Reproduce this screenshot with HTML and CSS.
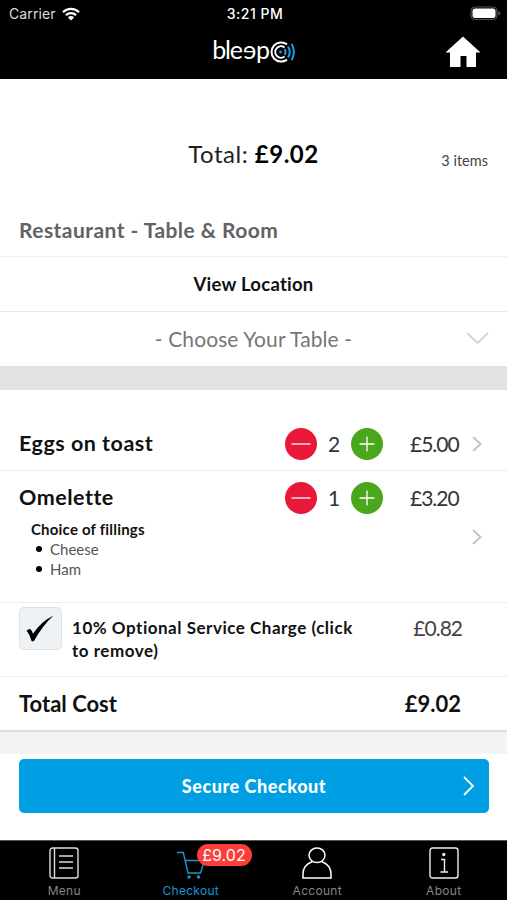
FILE: index.html
```html
<!DOCTYPE html>
<html lang="en">
<head>
  <meta charset="UTF-8" />
  <meta name="viewport" content="width=device-width, initial-scale=1.0" />
  <title>Checkout</title>
  <link rel="stylesheet" href="styles.css">
</head>
<body>
  <header class="header">
    <div class="status-bar">
      <div class="carrier">
        <span>Carrier</span>
        <svg width="18" height="14" viewBox="0 0 18 14" fill="none" stroke="#fff" stroke-width="2.3">
          <path d="M1 5.2a11.4 11.4 0 0 1 16 0M3.9 8.2a7.3 7.3 0 0 1 10.2 0" />
          <path d="M9 13.5L5.9 10.4a4.4 4.4 0 0 1 6.2 0z" fill="#fff" stroke="none" />
        </svg>
      </div>
      <span class="clock">3:21 PM</span>
      <svg class="battery" width="31" height="15" viewBox="0 0 31 15">
        <rect x="1" y="1" width="26" height="12.5" rx="4" fill="none" stroke="#555" stroke-width="1.2" />
        <rect x="2.5" y="2.5" width="23" height="9.5" rx="2.5" fill="#fff" />
        <path d="M28.5 5v4.5q1.7-.6 1.7-2.2T28.5 5z" fill="#666" />
      </svg>
    </div>
    <div class="nav-bar">
      <div class="logo">
        <span class="logo-text">ble<span class="flip">e</span>p</span>
        <svg width="27" height="24" viewBox="0 0 27 24" fill="none" stroke-width="2">
          <path d="M18 4.4A9.6 9.6 0 1 0 18 19.6M15.5 7.5A5.7 5.7 0 1 0 15.5 16.5" stroke="#fff" />
          <circle cx="11.5" cy="12" r="1.4" fill="#1c9fdc" />
          <path d="M15.5 9q2.200 3 0 6M19 6.500q3.600 5.500 0 11M22.500 3.700q4.800 8.300 0 16.600" stroke="#1c9fdc" />
        </svg>
      </div>
      <svg class="home" width="36" height="32" viewBox="0 0 36 32">
        <path d="M18 .5L35.5 16.5H31V31H21.500V20h-6v11H5V16.500H.5z" fill="#fff" />
      </svg>
    </div>
  </header>

  <main>
    <section class="summary">
      <div class="summary-total">Total: <b>£9.02</b></div>
      <div class="summary-count">3 items</div>
    </section>

    <h2 class="venue">Restaurant - Table &amp; Room</h2>
    <div class="location">View Location</div>
    <div class="table-select">
      <span>- Choose Your Table -</span>
      <svg width="23" height="13" viewBox="0 0 23 13" fill="none" stroke="#d4d4d4" stroke-width="1.8">
        <path d="M1 1l10.5 10L22 1" />
      </svg>
    </div>
    <div class="divider"></div>

    <section class="item item-first">
      <div class="item-row">
        <h3>Eggs on toast</h3>
        <div class="stepper">
          <svg width="32" height="32" viewBox="0 0 32 32"><circle cx="16" cy="16" r="16" fill="#e91838" /><path d="M6.5 16h19" stroke="#fff" stroke-width="1.3" /></svg>
          <span>2</span>
          <svg width="32" height="32" viewBox="0 0 32 32"><circle cx="16" cy="16" r="16" fill="#4aa61b" /><path d="M8.5 16h15M16 8.5v15" stroke="#fff" stroke-width="1.3" /></svg>
        </div>
        <span class="price">£5.00</span>
        <svg class="chevron" width="10" height="16" viewBox="0 0 10 16"><path d="M1 1l7.5 7L1 15" /></svg>
      </div>
    </section>

    <section class="item item-options">
      <div class="item-row">
        <h3>Omelette</h3>
        <div class="stepper">
          <svg width="32" height="32" viewBox="0 0 32 32"><circle cx="16" cy="16" r="16" fill="#e91838" /><path d="M6.5 16h19" stroke="#fff" stroke-width="1.3" /></svg>
          <span>1</span>
          <svg width="32" height="32" viewBox="0 0 32 32"><circle cx="16" cy="16" r="16" fill="#4aa61b" /><path d="M8.5 16h15M16 8.5v15" stroke="#fff" stroke-width="1.3" /></svg>
        </div>
        <span class="price">£3.20</span>
      </div>
      <div class="options">
        <div>
          <h4>Choice of fillings</h4>
          <ul>
            <li>Cheese</li>
            <li>Ham</li>
          </ul>
        </div>
        <svg class="chevron" width="10" height="16" viewBox="0 0 10 16"><path d="M1 1l7.5 7L1 15" /></svg>
      </div>
    </section>

    <section class="service">
      <div class="checkbox">
        <svg width="28" height="27" viewBox="0 0 28 27">
          <path d="M.5 15.500l3.500-1.700q2 1.700 3 5Q15 6.500 27.500.5 16.500 10.500 8 26q-1.500.8-2.500 0Q4 19.500.5 15.500z" fill="#000" />
        </svg>
      </div>
      <p>10% Optional Service Charge (click<br>to remove)</p>
      <span class="service-price">£0.82</span>
    </section>

    <section class="total-cost">
      <span>Total Cost</span>
      <span>£9.02</span>
    </section>
    <div class="gap"></div>
    <div class="checkout">
      <button type="button">
        <span>Secure Checkout</span>
        <svg width="12" height="20" viewBox="0 0 12 20" fill="none" stroke="#fff" stroke-width="1.8"><path d="M1 1l9 9-9 9" /></svg>
      </button>
    </div>
  </main>

  <nav class="tabs">
    <div class="tab">
      <svg width="30" height="32" viewBox="0 0 30 32" fill="none" stroke="#ddd" stroke-width="1.4">
        <rect x="1" y="1" width="28" height="30" rx="2.5" />
        <path d="M5.5 1v30M10 9h14M10 15h14M10 21h14" />
      </svg>
      <span>Menu</span>
    </div>
    <div class="tab active">
      <svg width="30" height="32" viewBox="0 0 30 32" fill="none" stroke="#1995d2" stroke-width="1.4">
        <path d="M1 5.5h6.300L12 26h12.500L28.500 13.500H9" />
        <circle cx="13" cy="30" r="1" fill="#1995d2" />
        <circle cx="22.5" cy="30" r="1" fill="#1995d2" />
      </svg>
      <span class="badge">£9.02</span>
      <span>Checkout</span>
    </div>
    <div class="tab">
      <svg width="30" height="32" viewBox="0 0 30 32" fill="none" stroke="#fff" stroke-width="1.5">
        <ellipse cx="15" cy="8.3" rx="8" ry="7.3" />
        <path d="M10.5 14.5Q1 18 1 27v4h28v-4q0-9-9.500-12.500" />
      </svg>
      <span>Account</span>
    </div>
    <div class="tab">
      <svg width="30" height="32" viewBox="0 0 30 32" fill="none" stroke="#eee" stroke-width="1.4">
        <rect x="1" y="1" width="28" height="30" rx="2.5" />
        <path d="M12 12.5h3.500V25M11.500 25h7.500" />
        <circle cx="14.8" cy="7.5" r="1" fill="#eee" />
      </svg>
      <span>About</span>
    </div>
  </nav>
</body>
</html>
```
FILE: styles.css
```css
* {
  box-sizing: border-box;
  margin: 0;
  padding: 0;
}

body {
  width: 507px;
  height: 900px;
  overflow: hidden;
  font-family: Lato, sans-serif;
  font-variant-ligatures: none;
  color: #111;
  background: #fff;
}

svg {
  display: block;
  flex-shrink: 0;
}

span, h2, h3, h4, p {
  white-space: nowrap;
}

.header {
  height: 79px;
  background: #000;
  color: #fff;
}

.status-bar {
  display: grid;
  grid-template-columns: 1fr auto 1fr;
  align-items: center;
  height: 27px;
  padding: 0 6px 0 9px;
  font-family: Inter, sans-serif;
  font-size: 14px;
}

.carrier {
  display: flex;
  align-items: center;
  gap: 6px;
  color: #ddd;
  letter-spacing: 0.1px;
}

.clock {
  font-weight: 500;
  font-size: 14px;
  letter-spacing: 0.5px;
}

.battery {
  justify-self: end;
}

.nav-bar {
  display: grid;
  grid-template-columns: 1fr auto 1fr;
  align-items: center;
  height: 49px;
  padding-right: 26px;
}

.logo {
  grid-column: 2;
  display: flex;
  align-items: center;
  margin-left: 27px;
}

.logo-text {
  margin-top: -5px;
  font-size: 25px;
  line-height: 28px;
  letter-spacing: -1.2px;
}

.flip {
  display: inline-block;
  margin-left: 1px;
  letter-spacing: 0;
  transform: scaleX(-1);
}

.home {
  justify-self: end;
}

.summary {
  display: grid;
  grid-template-columns: 1fr auto 1fr;
  align-items: center;
  height: 124px;
  padding: 24px 19px 0;
}

.summary-total {
  grid-column: 2;
  font-size: 24px;
  letter-spacing: 0.5px;
  color: #222;
}

.summary-total b {
  color: #000;
}

.summary-count {
  justify-self: end;
  padding-top: 14px;
  font-size: 14.5px;
  color: #444;
}

.venue {
  height: 54px;
  padding: 0 19px;
  border-bottom: 1px solid #eee;
  font-size: 21px;
  line-height: 53px;
  letter-spacing: 0.45px;
  color: #626262;
}

.location {
  height: 55px;
  border-bottom: 1px solid #e8e8e8;
  font-size: 18.5px;
  font-weight: 700;
  line-height: 54px;
  letter-spacing: 0.25px;
  text-align: center;
}

.table-select {
  display: grid;
  grid-template-columns: 1fr auto 1fr;
  align-items: center;
  height: 54px;
  padding: 0 18px 1px;
  font-size: 21px;
  letter-spacing: 0.1px;
  color: #777;
}

.table-select span {
  grid-column: 2;
  padding-bottom: 1px;
}

.table-select svg {
  justify-self: end;
}

.divider {
  height: 24px;
  background: #e2e2e4;
}

.item {
  padding: 0 25px 0 19px;
  border-bottom: 1px solid #eee;
}

.item-first {
  padding-top: 27px;
}

.item-row {
  display: grid;
  grid-template-columns: 266px 98px 1fr 10px;
  align-items: center;
  height: 53px;
}

.item-row h3 {
  padding-bottom: 1px;
  font-size: 21.5px;
  letter-spacing: 0.5px;
}

.stepper {
  display: flex;
  align-items: center;
  justify-content: space-between;
  font-size: 21px;
  color: #333;
}

.price {
  padding: 0 0 1px 27px;
  font-size: 21px;
  letter-spacing: -1px;
  color: #333;
}

.chevron {
  fill: none;
  stroke: #c4c4c4;
  stroke-width: 2;
}

.item-options {
  height: 132px;
}

.options {
  display: flex;
  justify-content: space-between;
  margin-top: -3px;
  padding-left: 12px;
}

.options h4 {
  font-size: 15px;
  line-height: 16px;
  letter-spacing: 0.2px;
}

.options ul {
  padding: 2px 0 0 19px;
  font-size: 15px;
  line-height: 20px;
  list-style: none;
  color: #555;
}

.options li::before {
  content: "";
  float: left;
  width: 6px;
  height: 6px;
  margin: 7px 0 0 -14px;
  border-radius: 50%;
  background: #000;
}

.options .chevron {
  margin-top: 8px;
}

.service {
  display: grid;
  grid-template-columns: 53px 1fr auto;
  height: 74px;
  padding: 4px 45px 0 19px;
  border-bottom: 1px solid #eee;
}

.checkbox {
  display: flex;
  align-items: center;
  justify-content: center;
  width: 43px;
  height: 43px;
  padding-right: 2px;
  border: 1px solid #dde1e4;
  border-radius: 5px;
  background: #eff2f5;
}

.service p {
  padding-top: 9px;
  font-size: 17px;
  font-weight: 700;
  line-height: 23px;
  letter-spacing: 0.52px;
}

.service-price {
  padding-top: 8px;
  font-size: 21px;
  line-height: 25px;
  letter-spacing: -1px;
  color: #444;
}

.total-cost {
  display: flex;
  align-items: center;
  justify-content: space-between;
  height: 53px;
  padding: 0 46px 1px 19px;
  font-size: 22px;
  font-weight: 700;
}

.gap {
  height: 24px;
  border-top: 2px solid #dedede;
  background: #f3f3f3;
}

.checkout {
  height: 86px;
  padding: 5px 18px 0 19px;
}

.checkout button {
  display: grid;
  grid-template-columns: 1fr auto 1fr;
  align-items: center;
  width: 100%;
  height: 54px;
  padding: 0 14px;
  border: none;
  border-radius: 5px;
  background: #009fe3;
  color: #fff;
  font: 900 18px Lato, sans-serif;
  letter-spacing: 0.55px;
}

.checkout button span {
  grid-column: 2;
}

.checkout button svg {
  justify-self: end;
}

.tabs {
  display: grid;
  grid-template-columns: repeat(4, 126.5px);
  height: 60px;
  border-top: 1px solid #555;
  background: #000;
}

.tab {
  position: relative;
  display: flex;
  flex-direction: column;
  align-items: center;
  padding: 6px 0 0 2px;
  gap: 4px;
  color: #858585;
  font-family: Inter, sans-serif;
  font-size: 12px;
  line-height: 16px;
  letter-spacing: 0.3px;
}

.active {
  color: #1995d2;
}

.badge {
  position: absolute;
  top: 3px;
  left: 70px;
  width: 55px;
  height: 22px;
  border-radius: 11px;
  background: #fc3d39;
  color: #fff;
  font: 16px/22px Inter, sans-serif;
  letter-spacing: 0;
  text-align: center;
}
```
